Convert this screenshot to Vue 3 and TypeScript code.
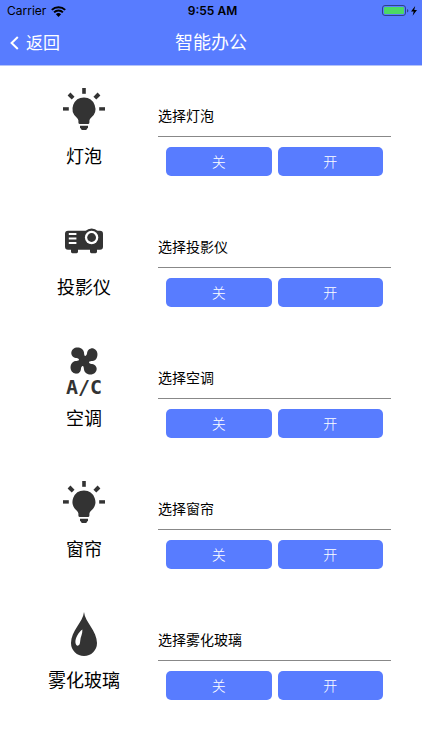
<script setup lang="ts">
import { ref } from 'vue'

type IconName = 'bulb' | 'projector' | 'fan' | 'drop'

interface Device {
  id: string
  name: string
  icon: IconName
}

const devices: Device[] = [
  { id: 'light', name: '灯泡', icon: 'bulb' },
  { id: 'projector', name: '投影仪', icon: 'projector' },
  { id: 'ac', name: '空调', icon: 'fan' },
  { id: 'curtain', name: '窗帘', icon: 'bulb' },
  { id: 'glass', name: '雾化玻璃', icon: 'drop' },
]

const power = ref<Record<string, boolean>>({})

function setPower(id: string, on: boolean): void {
  power.value[id] = on
}
</script>

<template>
  <div class="page">
    <header class="header">
      <div class="status">
        <div class="carrier">
          <span>Carrier</span>
          <svg class="wifi" viewBox="0 0 15 11" aria-hidden="true">
            <path d="M0.8 3.9A9.6 9.6 0 0 1 14.2 3.9" />
            <path d="M3.1 6.4A6.2 6.2 0 0 1 11.9 6.4" />
            <path class="solid" d="M7.5 11L4.9 8.3A3.7 3.7 0 0 1 10.1 8.3Z" />
          </svg>
        </div>
        <span class="clock">9:55 AM</span>
        <svg class="battery" viewBox="0 0 36 12" aria-hidden="true">
          <rect class="shell" x="0.5" y="0.5" width="23" height="10" rx="2.5" />
          <rect class="charge" x="2" y="2" width="20" height="7" rx="1" />
          <path class="tip" d="M25 4v3.4q1.4-.5 1.4-1.7T25 4Z" />
          <path class="bolt" d="M33.2 1L29 6.4h2.7L30.6 10.8L35 5.1h-2.8Z" />
        </svg>
      </div>
      <nav class="bar">
        <a class="back" href="#">
          <svg viewBox="0 0 9 14" aria-hidden="true"><path d="M7.8 1L1.6 7l6.2 6" /></svg>
          <span>返回</span>
        </a>
        <h1 class="title">智能办公</h1>
      </nav>
    </header>

    <main>
      <section v-for="device in devices" :key="device.id" class="device">
        <div class="info">
          <svg class="icon" viewBox="0 0 48 48" aria-hidden="true">
            <g v-if="device.icon === 'bulb'">
              <path d="M24 12.4a11.4 11.4 0 0 1 7.3 20.1q-1.7 1.4-1.9 3v2q0 1.5-1.5 1.5h-8q-1.5 0-1.5-1.5v-2q-.2-1.6-1.8-3A11.4 11.4 0 0 1 24 12.4Z" />
              <path d="M20 40.8h8v1.6L26.2 45h-4.4L20 42.4Z" />
              <rect x="22.2" y="3" width="3.6" height="5.8" />
              <rect x="3" y="22.2" width="5.8" height="3.4" />
              <rect x="39.2" y="22.2" width="5.8" height="3.4" />
              <rect x="9" y="8.2" width="4" height="5.8" transform="rotate(-45 11 11)" />
              <rect x="35" y="8.2" width="4" height="5.8" transform="rotate(45 37 11)" />
            </g>
            <g v-else-if="device.icon === 'projector'">
              <rect x="5" y="14.8" width="38" height="19" rx="3" />
              <path d="M11 33h7v2.8q0 1.4-1.4 1.4h-4.2q-1.4 0-1.4-1.4ZM30 33h7v2.8q0 1.4-1.4 1.4h-4.2q-1.4 0-1.4-1.4Z" />
              <circle cx="31.6" cy="21.5" r="9" />
              <circle class="paper" cx="31.6" cy="21.5" r="6.7" />
              <circle cx="31.6" cy="21.5" r="4.4" />
              <path class="vents" d="M8.8 18.1h7.6M8.8 22.6h7.6M8.8 27.1h7.6" />
            </g>
            <g v-else-if="device.icon === 'fan'">
              <g transform="translate(24 14)">
                <circle r="5" />
                <path
                  v-for="angle in [0, 90, 180, 270]"
                  :key="angle"
                  :transform="`rotate(${angle})`"
                  d="M4 -3.4C0.4 -4.2 0.2 -5.6 0 -8.4C-0.6 -12.2 -4 -13.8 -7.6 -13.4C-11.6 -12.8 -13 -9.4 -12.6 -7C-12 -4 -9.6 -3.2 -7.4 -3C-5 -2.6 -4.4 -1 -4 3Z"
                />
              </g>
              <text x="24" y="47" text-anchor="middle">A/C</text>
            </g>
            <g v-else>
              <path d="M24 3C25 13 37 22 37 34A13 13 0 0 1 11 34C11 22 23 13 24 3Z" />
              <path class="paper" d="M22.4 20.4C18.6 23 15.2 28.6 15.4 33.2Q15.8 37 18.2 36.6Q20 36 20.2 32C20.4 27.6 22.6 25 22.4 20.4Z" />
            </g>
          </svg>
          <h2 class="name">{{ device.name }}</h2>
        </div>
        <div class="controls">
          <select class="picker" :aria-label="`选择${device.name}`">
            <option>选择{{ device.name }}</option>
          </select>
          <div class="switches">
            <button type="button" :aria-pressed="power[device.id] === false" @click="setPower(device.id, false)">关</button>
            <button type="button" :aria-pressed="power[device.id] === true" @click="setPower(device.id, true)">开</button>
          </div>
        </div>
      </section>
    </main>
  </div>
</template>

<style>
body {
  margin: 0;
  background: #fff;
}
</style>

<style scoped>
.page {
  font-family: Inter, "Noto Sans CJK SC", sans-serif;
  color: #000;
}

.header {
  background: #587cff;
  border-bottom: 1px solid #b4c3f8;
}

.status {
  display: grid;
  grid-template-columns: 1fr auto 1fr;
  align-items: center;
  height: 22px;
  padding: 0 4px 0 7px;
  font-size: 12px;
  line-height: 22px;
}

.carrier {
  display: flex;
  align-items: center;
  gap: 5px;
}

.wifi {
  width: 15px;
  height: 11px;
  fill: none;
  stroke: #000;
  stroke-width: 2;
}

.wifi .solid {
  fill: #000;
  stroke: none;
}

.clock {
  font-weight: 600;
}

.battery {
  justify-self: end;
  width: 36px;
  height: 12px;
}

.shell {
  fill: none;
  stroke: #2f438a;
}

.charge {
  fill: #4cd964;
}

.tip {
  fill: #2f438a;
}

.bar {
  display: grid;
  grid-template-columns: 1fr auto 1fr;
  align-items: center;
  height: 42px;
  padding: 0 10px 1px;
}

.back {
  display: flex;
  align-items: center;
  gap: 7px;
  color: #fff;
  font-size: 17px;
  font-weight: 400;
  line-height: 24px;
  text-decoration: none;
}

.back svg {
  width: 9px;
  height: 14px;
  fill: none;
  stroke: #fff;
  stroke-width: 2;
}

.title {
  margin: 0;
  color: #fff;
  font-size: 18px;
  font-weight: 400;
  line-height: 26px;
}

.device {
  display: grid;
  grid-template-columns: 148px 1fr;
  padding: 19px 31px 20px 10px;
}

.info {
  display: flex;
  flex-direction: column;
  align-items: center;
  gap: 11px;
}

.icon {
  width: 48px;
  height: 48px;
  overflow: visible;
  fill: #333;
}

.icon text {
  font-family: "DejaVu Sans Mono", monospace;
  font-size: 20px;
  font-weight: 700;
}

.paper {
  fill: #fff;
}

.vents {
  fill: none;
  stroke: #fff;
  stroke-width: 2;
}

.name {
  margin: 0;
  font-size: 18px;
  font-weight: 400;
  line-height: 26px;
}

.controls {
  padding: 11px 0 1px;
}

.picker {
  display: block;
  width: 100%;
  height: 41px;
  padding: 0 0 2px;
  border: 0;
  border-bottom: 1px solid #888;
  border-radius: 0;
  appearance: none;
  background: transparent;
  color: #000;
  font: inherit;
  font-size: 14px;
}

.switches {
  display: grid;
  grid-template-columns: 1fr 1fr;
  gap: 6px;
  padding: 10px 8px 0;
}

.switches button {
  height: 29px;
  padding: 0;
  border: 0;
  border-radius: 5px;
  background: #587cff;
  color: #fff;
  font: inherit;
  font-size: 14px;
  font-weight: 300;
  line-height: 29px;
}
</style>
